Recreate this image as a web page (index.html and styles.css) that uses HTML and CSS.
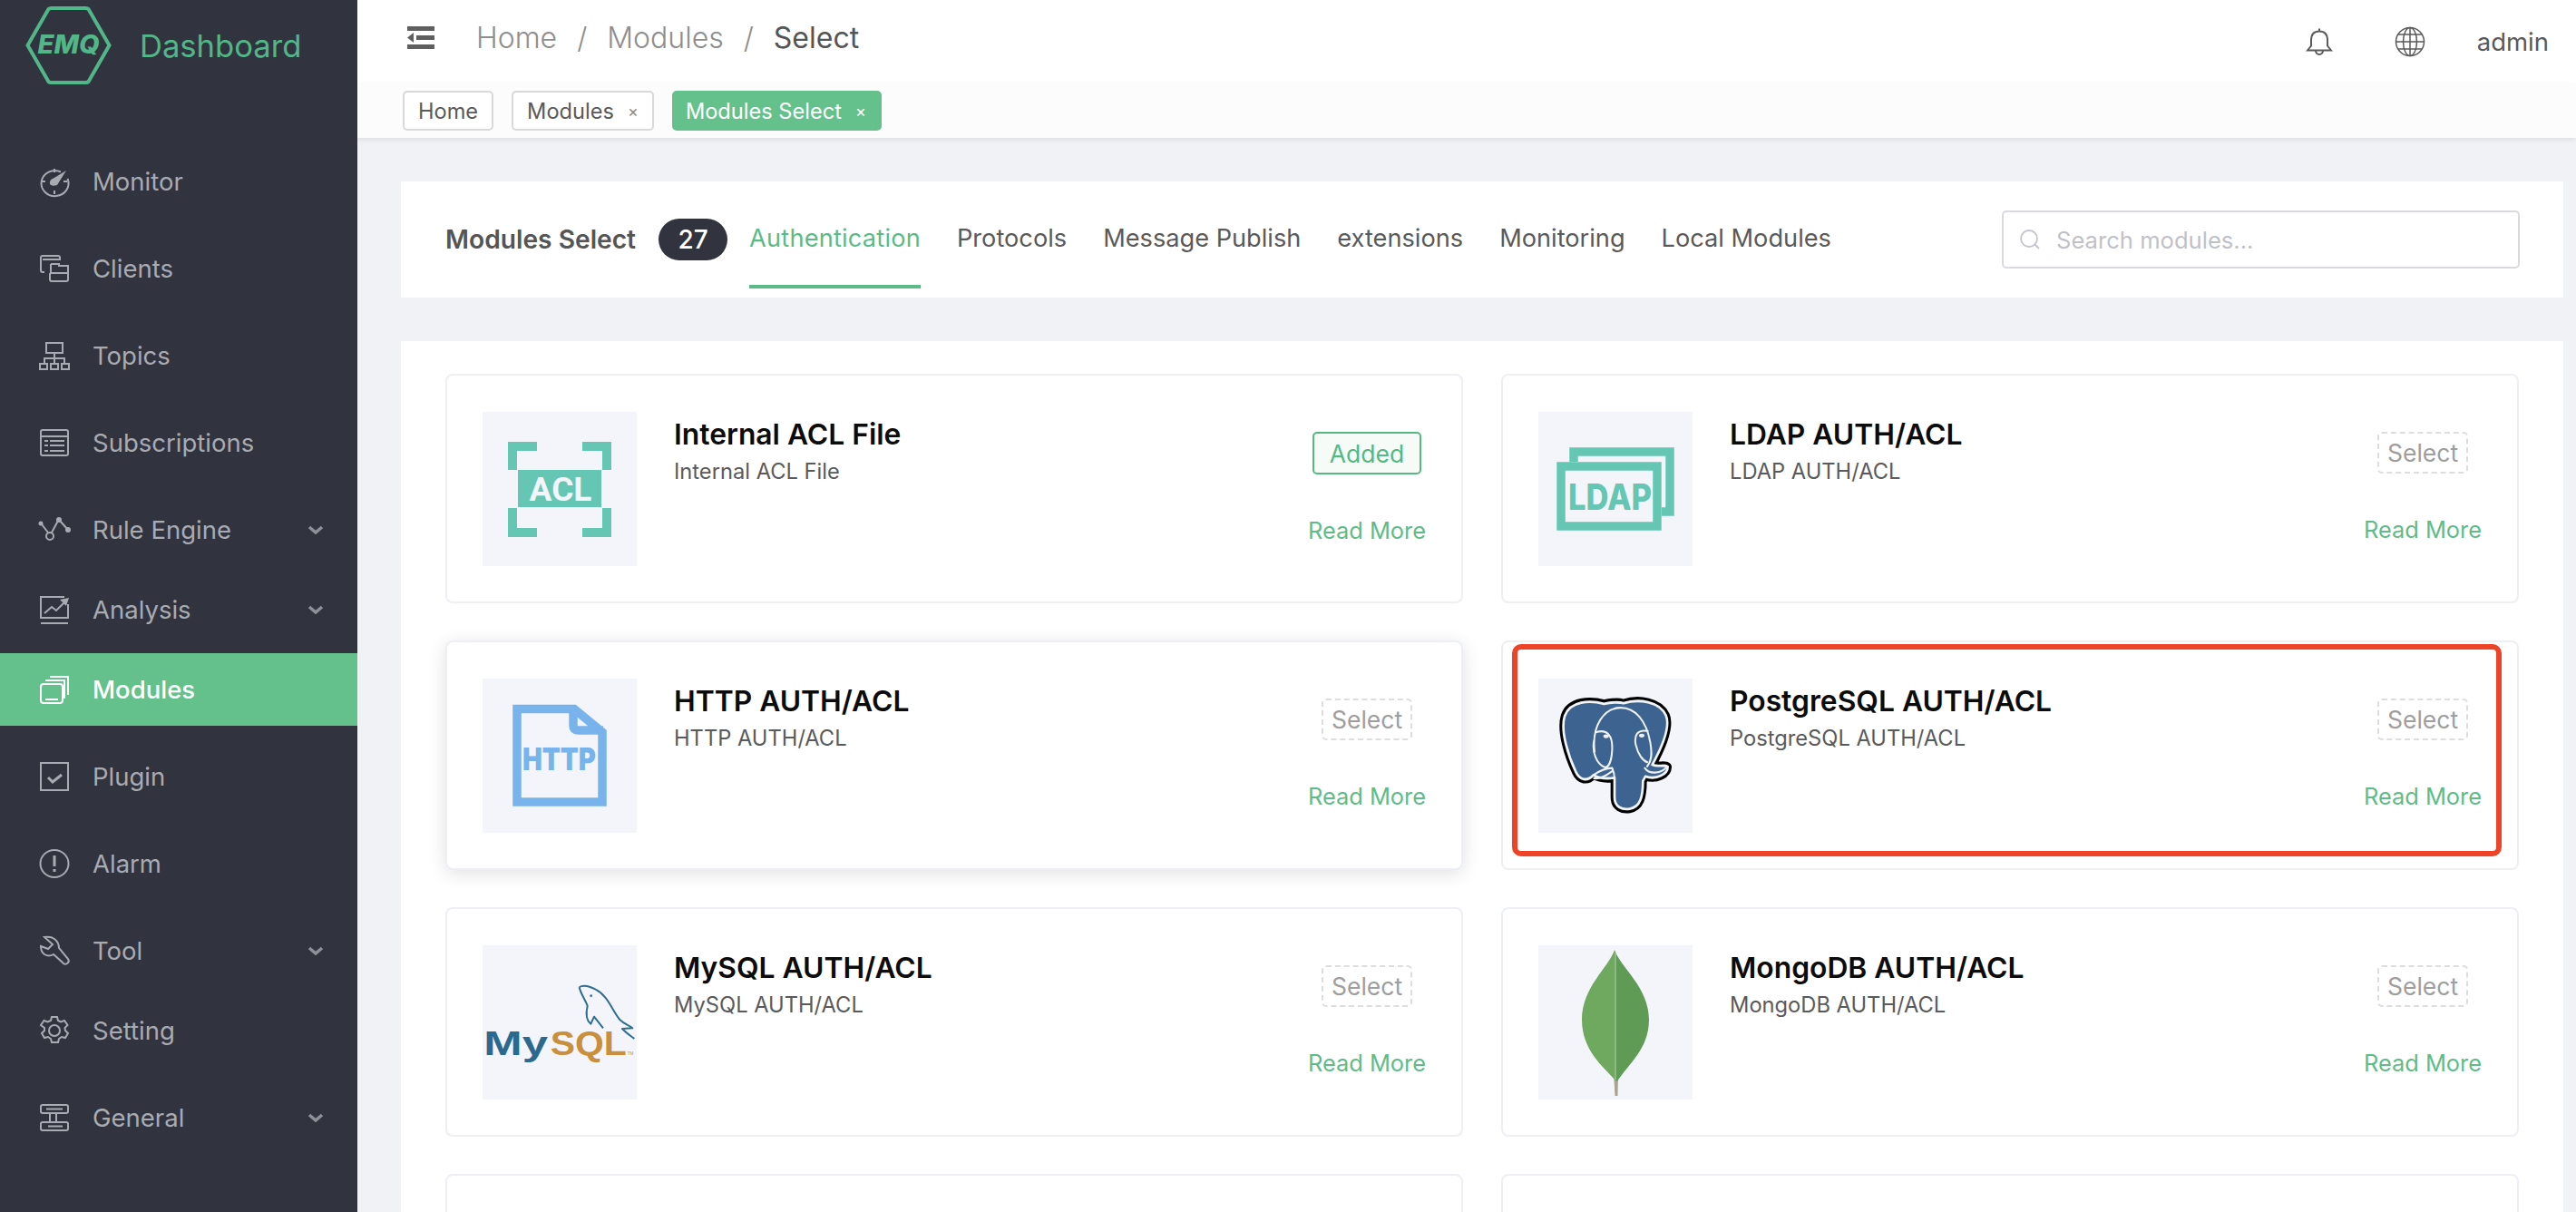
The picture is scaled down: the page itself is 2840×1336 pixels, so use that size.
FILE: index.html
```html
<!DOCTYPE html>
<html lang="en">
<head>
<meta charset="utf-8">
<title>EMQ Dashboard</title>
<link rel="stylesheet" href="styles.css">
</head>
<body>
<div class="app">
  <aside class="sidebar">
    <div class="brand">
      <svg class="brand-logo" viewBox="0 0 94 86"><path class="hex" d="M2 43 L25 3 Q26 2 28 2 H66 Q68 2 69 3 L92 43 L69 83 Q68 84 66 84 H28 Q26 84 25 83 Z"/><text class="hex-text" x="13" y="52" textLength="68" lengthAdjust="spacingAndGlyphs">EMQ</text></svg>
      <span class="brand-name">Dashboard</span>
    </div>
    <nav class="menu">
      <a class="item"><svg class="ic" viewBox="0 0 32 32"><path d="M23 5.5A15 14 0 1 0 30.500 13M16 2v4M16 26v4M2 16h4M26 16h4"/><path class="solid" d="M29 4 L19 20 Q13 22 11 19 Q10 14 15 12.500Z"/></svg><span>Monitor</span></a>
      <a class="item"><svg class="ic" viewBox="0 0 32 32"><path d="M5 20H3a2 2 0 0 1-2-2V4a2 2 0 0 1 2-2h17a2 2 0 0 1 2 2v2H3M12 11h9v3M12 11v10h19V13h-9M31 21v7a2 2 0 0 1-2 2H13a2 2 0 0 1-2-2v-7"/></svg><span>Clients</span></a>
      <a class="item"><svg class="ic ic-34" viewBox="0 0 34 32"><rect x="8" y="2" width="18" height="11"/><path d="M17 13v6M6 25v-6h22v6M17 19v6"/><rect x="1" y="25" width="8" height="6"/><rect x="13" y="25" width="8" height="6"/><rect x="25" y="25" width="8" height="6"/></svg><span>Topics</span></a>
      <a class="item"><svg class="ic" viewBox="0 0 32 32"><rect x="1" y="2" width="30" height="28" rx="2"/><path d="M1 9h30M5 14h4M11 14h16M5 19h4M11 19h16M5 25h4M11 25h16"/></svg><span>Subscriptions</span></a>
      <a class="item item-sub"><svg class="ic ic-36" viewBox="0 0 36 32"><path d="M4 10 L11 19M15 19 L22 6M24 6 L33 16"/><circle class="solid" cx="3" cy="9" r="2.500"/><circle cx="13" cy="23" r="4"/><circle class="solid" cx="23" cy="5" r="3"/><circle class="solid" cx="33" cy="16" r="3"/></svg><span>Rule Engine</span><svg class="chev" viewBox="0 0 18 10"><path d="M2 2l7 6 7-6"/></svg></a>
      <a class="item item-sub"><svg class="ic" viewBox="0 0 32 32"><path d="M27 2H1v23h30V10M1 31h30M5 20l8-7 5 4 9-9"/><path class="solid" d="M22 5l10-2-3 9z"/></svg><span>Analysis</span><svg class="chev" viewBox="0 0 18 10"><path d="M2 2l7 6 7-6"/></svg></a>
      <a class="item active"><svg class="ic" viewBox="0 0 32 32"><rect x="1" y="10" width="24" height="21" rx="3"/><path d="M6 27h14M6 6h21v20M11 2h20v20"/></svg><span>Modules</span></a>
      <a class="item"><svg class="ic" viewBox="0 0 32 32"><rect x="1" y="1" width="30" height="30"/><path class="thick" d="M9 17l5 5 10-8"/></svg><span>Plugin</span></a>
      <a class="item"><svg class="ic ic-34" viewBox="0 0 34 32"><ellipse cx="17" cy="16" rx="15.500" ry="15"/><path class="thick" d="M17 7v12M17 22v3"/></svg><span>Alarm</span></a>
      <a class="item item-sub"><svg class="ic" viewBox="0 0 32 32"><path d="M5 1Q12 0 16 3Q21 7 21 13L31 25Q33 28 30 30Q27 32 25 29L15 20Q10 23 5 20Q1 17 1 11L9 14L14 9Z"/></svg><span>Tool</span><svg class="chev" viewBox="0 0 18 10"><path d="M2 2l7 6 7-6"/></svg></a>
      <a class="item"><svg class="ic" viewBox="0 0 32 32"><circle cx="16" cy="16" r="6"/><path d="M13 1h6l1 4 3 1.500 4-1.500 3.500 5-3 3 .5 3 3 3-3 5-4-1-3 2-1 4h-7l-1-4-3-2-4 1-3-5 3-3v-3L1 10l3.500-5 4 1.500L12 5z"/></svg><span>Setting</span></a>
      <a class="item item-sub"><svg class="ic" viewBox="0 0 32 32"><rect x="1" y="2" width="30" height="9" rx="2"/><rect x="1" y="21" width="30" height="9" rx="2"/><path d="M11 11v10M18 11v10M7 6.500h18M9 25.500h16"/></svg><span>General</span><svg class="chev" viewBox="0 0 18 10"><path d="M2 2l7 6 7-6"/></svg></a>
    </nav>
  </aside>

  <main class="main">
    <header class="topbar">
      <svg class="fold" viewBox="0 0 30 25"><path d="M0 0h30v5H0zM0 20h30v5H0zM10 10h20v5H10zM7 7v11L0 12.500z"/></svg>
      <div class="crumbs">
        <span>Home</span><i>/</i><span>Modules</span><i>/</i><b>Select</b>
      </div>
      <div class="top-right">
        <svg class="bell" viewBox="0 0 30 32"><path d="M15 1.500v3M15 4.500c-6 0-9 4-9 10v6l-4 5h26l-4-5v-6c0-6-3-10-9-10zM11 25.500c0 6 8 6 8 0"/></svg>
        <svg class="globe" viewBox="0 0 34 34"><circle cx="17" cy="17" r="15.500"/><ellipse cx="17" cy="17" rx="7.500" ry="15.500"/><path d="M17 1.500v31M1.500 17h31M4 9h26M4 25h26"/></svg>
        <span class="admin">admin</span>
      </div>
    </header>
    <div class="tagsbar">
      <span class="tag">Home</span>
      <span class="tag">Modules<em>×</em></span>
      <span class="tag tag-on">Modules Select<em>×</em></span>
    </div>

    <div class="content">
      <section class="head-card">
        <strong class="head-title">Modules Select</strong>
        <span class="badge">27</span>
        <div class="tabs">
          <a class="tab tab-on">Authentication</a>
          <a class="tab">Protocols</a>
          <a class="tab">Message Publish</a>
          <a class="tab">extensions</a>
          <a class="tab">Monitoring</a>
          <a class="tab">Local Modules</a>
        </div>
        <label class="search">
          <svg viewBox="0 0 24 24"><circle cx="11" cy="11" r="9"/><path d="M17.500 17.500L22 22"/></svg>
          <input type="text" placeholder="Search modules...">
        </label>
      </section>

      <section class="list">
        <article class="card">
          <div class="thumb"><svg viewBox="0 0 170 170"><path class="acl" d="M28 33h32v10H38v21H28zM110 33h32v31h-10V43h-22zM28 106h10v22h22v10H28zM132 106h10v32h-32v-10h22z"/><rect class="acl" x="39" y="64" width="92" height="41"/><text class="acl-text" x="86" y="98" text-anchor="middle">ACL</text></svg></div>
          <div class="info"><h3>Internal ACL File</h3><p>Internal ACL File</p></div>
          <div class="acts"><span class="btn btn-added">Added</span><a class="more">Read More</a></div>
        </article>
        <article class="card">
          <div class="thumb"><svg viewBox="0 0 170 170"><path class="ldap-line" d="M39 55V44h106v66h-9"/><rect class="ldap-line" x="25" y="60" width="106" height="66"/><text class="ldap-text" x="33" y="108" textLength="92" lengthAdjust="spacingAndGlyphs">LDAP</text></svg></div>
          <div class="info"><h3>LDAP AUTH/ACL</h3><p>LDAP AUTH/ACL</p></div>
          <div class="acts"><span class="btn">Select</span><a class="more">Read More</a></div>
        </article>
        <article class="card card-hover">
          <div class="thumb"><svg viewBox="0 0 170 170"><path class="http-line" d="M38 33.500h63l31 25.500v77H38zM100 34v18q0 5 5 5h28"/><text class="http-text" x="44" y="101" textLength="81" lengthAdjust="spacingAndGlyphs">HTTP</text></svg></div>
          <div class="info"><h3>HTTP AUTH/ACL</h3><p>HTTP AUTH/ACL</p></div>
          <div class="acts"><span class="btn">Select</span><a class="more">Read More</a></div>
        </article>
        <article class="card">
          <div class="thumb"><svg viewBox="168 974 510 476" preserveAspectRatio="none">
            <path class="pg-out" d="M385 1052C340 1040 272 1042 255 1090C240 1135 268 1215 292 1262C305 1288 330 1292 350 1272C370 1282 395 1284 420 1280L420 1340C420 1370 445 1380 470 1376C505 1370 514 1340 514 1290L522 1276C560 1288 596 1268 596 1246C585 1238 565 1248 545 1240C580 1180 605 1120 590 1088C570 1045 500 1035 450 1050C430 1045 405 1048 385 1052Z"/>
            <path class="pg-fill" d="M385 1052C340 1040 272 1042 255 1090C240 1135 268 1215 292 1262C305 1288 330 1292 350 1272C370 1282 395 1284 420 1280L420 1340C420 1370 445 1380 470 1376C505 1370 514 1340 514 1290L522 1276C560 1288 596 1268 596 1246C585 1238 565 1248 545 1240C580 1180 605 1120 590 1088C570 1045 500 1035 450 1050C430 1045 405 1048 385 1052Z"/>
            <path class="pg-white" d="M354 1200C344 1120 385 1064 440 1064C490 1064 525 1105 538 1170C544 1200 545 1225 528 1245M358 1140C395 1128 415 1150 412 1195C410 1230 400 1248 388 1248C360 1238 345 1200 352 1165M530 1136C495 1130 484 1150 490 1178C498 1210 515 1228 528 1232M350 1272C365 1262 385 1250 412 1250C418 1262 420 1270 420 1285M352 1282C372 1285 395 1272 412 1260M520 1250C535 1270 570 1268 590 1250"/>
            <ellipse class="pg-eye" cx="392" cy="1152" rx="9" ry="6"/><ellipse class="pg-eye" cx="510" cy="1150" rx="9" ry="6"/>
          </svg></div>
          <div class="info"><h3>PostgreSQL AUTH/ACL</h3><p>PostgreSQL AUTH/ACL</p></div>
          <div class="acts"><span class="btn">Select</span><a class="more">Read More</a></div>
          <div class="mark"></div>
        </article>
        <article class="card">
          <div class="thumb"><svg viewBox="156 66 510 510">
            <path class="dolphin" d="M476 204C490 196 512 202 530 212C570 232 585 282 610 312C625 327 640 330 652 340L618 342C630 355 645 365 658 375M476 204C480 226 496 246 503 266C498 288 496 312 514 326L525 302L555 340"/>
            <circle class="dolphin-eye" cx="515" cy="233" r="4"/>
            <text class="my" x="160" y="430" textLength="212" lengthAdjust="spacingAndGlyphs">My</text>
            <text class="sql" x="380" y="430" textLength="252" lengthAdjust="spacingAndGlyphs">SQL</text>
            <text class="tm" x="635" y="430">TM</text>
          </svg></div>
          <div class="info"><h3>MySQL AUTH/ACL</h3><p>MySQL AUTH/ACL</p></div>
          <div class="acts"><span class="btn">Select</span><a class="more">Read More</a></div>
        </article>
        <article class="card">
          <div class="thumb"><svg viewBox="0 0 170 170"><path class="leaf-stem" d="M83 140h5l-.500 26h-3z"/><path class="leaf-l" d="M84 5C78 24 48 46 48 82C48 116 72 134 84 148z"/><path class="leaf-r" d="M84 5C90 24 122 46 122 82C122 114 100 130 87 150l-3-2z"/><path class="leaf-v" d="M85 8v140"/></svg></div>
          <div class="info"><h3>MongoDB AUTH/ACL</h3><p>MongoDB AUTH/ACL</p></div>
          <div class="acts"><span class="btn">Select</span><a class="more">Read More</a></div>
        </article>
        <article class="card"></article>
        <article class="card"></article>
      </section>
    </div>
  </main>
</div>
</body>
</html>
```

FILE: styles.css
```css
* { box-sizing: border-box; }
html, body { margin: 0; height: 100%; overflow: hidden; }
body { font-family: Inter, "Liberation Sans", sans-serif; background: #f0f2f6; color: #5a5a5a; }
.app { display: flex; height: 1336px; }

/* sidebar */
.sidebar { width: 394px; flex: none; background: #31333f; color: #a9abb2; }
.brand { display: flex; align-items: center; height: 100px; padding-left: 28px; gap: 31px; }
.brand-logo { width: 95px; height: 86px; }
.hex { fill: none; stroke: #52b788; stroke-width: 4; }
.hex-text { font: italic 800 28px Inter, sans-serif; fill: #52b788; }
.brand-name { font-size: 34.6px; color: #52b788; }
.menu { display: flex; flex-direction: column; padding-top: 60px; }
.item { display: flex; align-items: center; height: 80px; margin-bottom: 16px; padding-left: 44px; font-size: 27.5px; }
.item-sub { margin-bottom: 8px; }
.item span { flex: 1; margin-left: 26px; }
.ic { width: 32px; height: 32px; flex: none; fill: none; stroke: currentColor; stroke-width: 2; overflow: visible; }
.ic-34 { width: 34px; margin: 0 -1px; }
.ic-36 { width: 36px; margin: 0 -2px; }
.ic .solid { fill: currentColor; stroke: none; }
.ic .thick { stroke-width: 3; }
.chev { width: 18px; height: 10px; margin-right: 37px; fill: none; stroke: #8f9198; stroke-width: 3.500; }
.active { background: #65c18c; color: #fff; font-weight: 500; }

/* main */
.main { flex: 1; min-width: 0; display: flex; flex-direction: column; overflow: hidden; }
.topbar { height: 92px; flex: none; display: flex; align-items: center; background: #fff; padding: 0 30px 10px 55px; }
.fold { width: 30px; height: 25px; fill: #5f5f5f; }
.crumbs { display: flex; align-items: center; margin-left: 46px; font-size: 32px; color: #8e8e8e; font-weight: 300; }
.crumbs i { font-style: normal; margin: 0 22px; }
.crumbs b { font-weight: 400; color: #555; }
.top-right { margin-left: auto; display: flex; align-items: center; padding-top: 10px; }
.bell { width: 30px; height: 32px; fill: none; stroke: #5a5a5a; stroke-width: 2; }
.globe { width: 34px; height: 34px; margin-left: 68px; fill: none; stroke: #5a5a5a; stroke-width: 1.500; }
.admin { margin-left: 57px; font-size: 27.5px; }
.tagsbar { height: 60px; flex: none; display: flex; align-items: center; gap: 20px; padding: 0 0 0 50px; background: #fcfcfc; box-shadow: 0 2px 6px rgba(0, 0, 0, .09); position: relative; }
.tag { display: flex; align-items: center; height: 44px; padding: 0 15px; border: 2px solid #d9d9d9; border-radius: 5px; background: #fff; font-size: 23.6px; color: #5a5a5a; }
.tag em { font-style: normal; width: 12px; margin-left: 15px; font-size: 18px; color: #8a8a8a; }
.tag-on { padding: 0 15px 0 13px; background: #65c18c; border-color: #65c18c; color: #fff; }
.tag-on em { color: #fff; }

.content { flex: 1; min-height: 0; padding: 48px 14px 0 48px; display: flex; flex-direction: column; gap: 48px; }
.head-card { flex: none; height: 128px; display: flex; align-items: center; background: #fff; padding: 0 48px 0 49px; }
.head-title { font-size: 28.2px; font-weight: 600; color: #555; }
.badge { width: 76px; height: 46px; margin-left: 25px; border-radius: 23px; background: #31333f; color: #fff; font-size: 28px; font-weight: 500; display: flex; align-items: center; justify-content: center; }
.tabs { display: flex; gap: 40px; height: 100%; margin-left: 24px; }
.tab { display: flex; align-items: center; height: 118px; font-size: 27.2px; color: #5a5a5a; padding-top: 10px; border-bottom: 4px solid transparent; }
.tab-on { color: #5bbb86; border-bottom-color: #5bbb86; letter-spacing: .2px; }
.search { margin-left: auto; width: 571px; height: 64px; display: flex; align-items: center; border: 2px solid #d9dade; border-radius: 5px; padding-left: 17px; }
.search svg { width: 24px; height: 24px; flex: none; fill: none; stroke: #c3c5cc; stroke-width: 1.800; }
.search input { flex: 1; min-width: 0; border: 0; outline: 0; margin-left: 17px; padding: 0; font: 25.6px Inter, sans-serif; background: transparent; }
.search input::placeholder { color: #bfc1c9; }

.list { flex: 1; min-height: 0; display: grid; grid-template-columns: 1fr 1fr; grid-auto-rows: 253px; column-gap: 42px; row-gap: 41px; background: #fff; padding: 36px 49px 0; overflow: hidden; }
.card { position: relative; display: flex; padding: 40px 39px; border: 2px solid #edeff5; border-radius: 8px; background: #fff; }
.card-hover { box-shadow: 0 4px 20px rgba(0, 0, 0, .12); }
.thumb { width: 170px; height: 170px; flex: none; background: #f4f5fb; }
.thumb svg { display: block; width: 170px; height: 170px; }
.info { flex: 1; margin-left: 41px; padding-top: 5px; min-width: 0; }
.info h3 { margin: 0; font-size: 31.8px; line-height: 40px; font-weight: 600; color: #0c0c0c; }
.info p { margin: 4px 0 0; font-size: 23.7px; line-height: 34px; color: #5a5a5a; }
.acts { width: 130px; flex: none; display: flex; flex-direction: column; align-items: center; padding-top: 22px; }
.btn { height: 46px; padding: 0 10px; width: 100px; display: flex; align-items: center; justify-content: center; border: 2px dashed #dddddd; border-radius: 5px; font-size: 26.5px; color: #9e9e9e; }
.btn-added { width: 120px; height: 47px; border: 2px solid #55b881; background: #f6fbf8; color: #55b881; }
.more { margin-top: 44px; font-size: 25.4px; line-height: 36px; color: #5fbc88; white-space: nowrap; }
.mark { position: absolute; top: 2px; left: 10px; right: 17px; bottom: 13px; border: 6px solid #ef4328; border-radius: 10px; pointer-events: none; }

/* logos */
.acl { fill: #65c6b3; }
.acl-text { font: 700 37px Roboto, sans-serif; fill: #f4f5fb; }
.ldap-line { fill: #f4f5fb; stroke: #65c6b3; stroke-width: 9.500; }
.ldap-text { font: 800 40px Inter, sans-serif; fill: #65c6b3; }
.http-line { fill: none; stroke: #78b3ec; stroke-width: 9.500; }
.http-text { font: 900 34px Inter, sans-serif; fill: #78b3ec; }
.pg-out { fill: #000; stroke: #000; stroke-width: 26; stroke-linejoin: round; }
.pg-fill { fill: #3d6490; stroke: #f2f4f8; stroke-width: 8; stroke-linejoin: round; }
.pg-white { fill: none; stroke: #eef1f6; stroke-width: 6; stroke-linecap: round; }
.pg-eye { fill: #eef1f6; }
.dolphin { fill: none; stroke: #2f6d8f; stroke-width: 6; stroke-linejoin: round; }
.dolphin-eye { fill: #2f6d8f; }
.my { font: 700 108px "Liberation Sans", sans-serif; fill: #2b6a8e; }
.sql { font: 700 108px "Liberation Sans", sans-serif; fill: #c98f3d; }
.tm { font: 400 14px "Liberation Sans", sans-serif; fill: #c98f3d; }
.leaf-l { fill: #6fa85f; }
.leaf-r { fill: #5f9b54; }
.leaf-v { fill: none; stroke: #9cc08f; stroke-width: 1.500; }
.leaf-stem { fill: #a8a48f; }
```
